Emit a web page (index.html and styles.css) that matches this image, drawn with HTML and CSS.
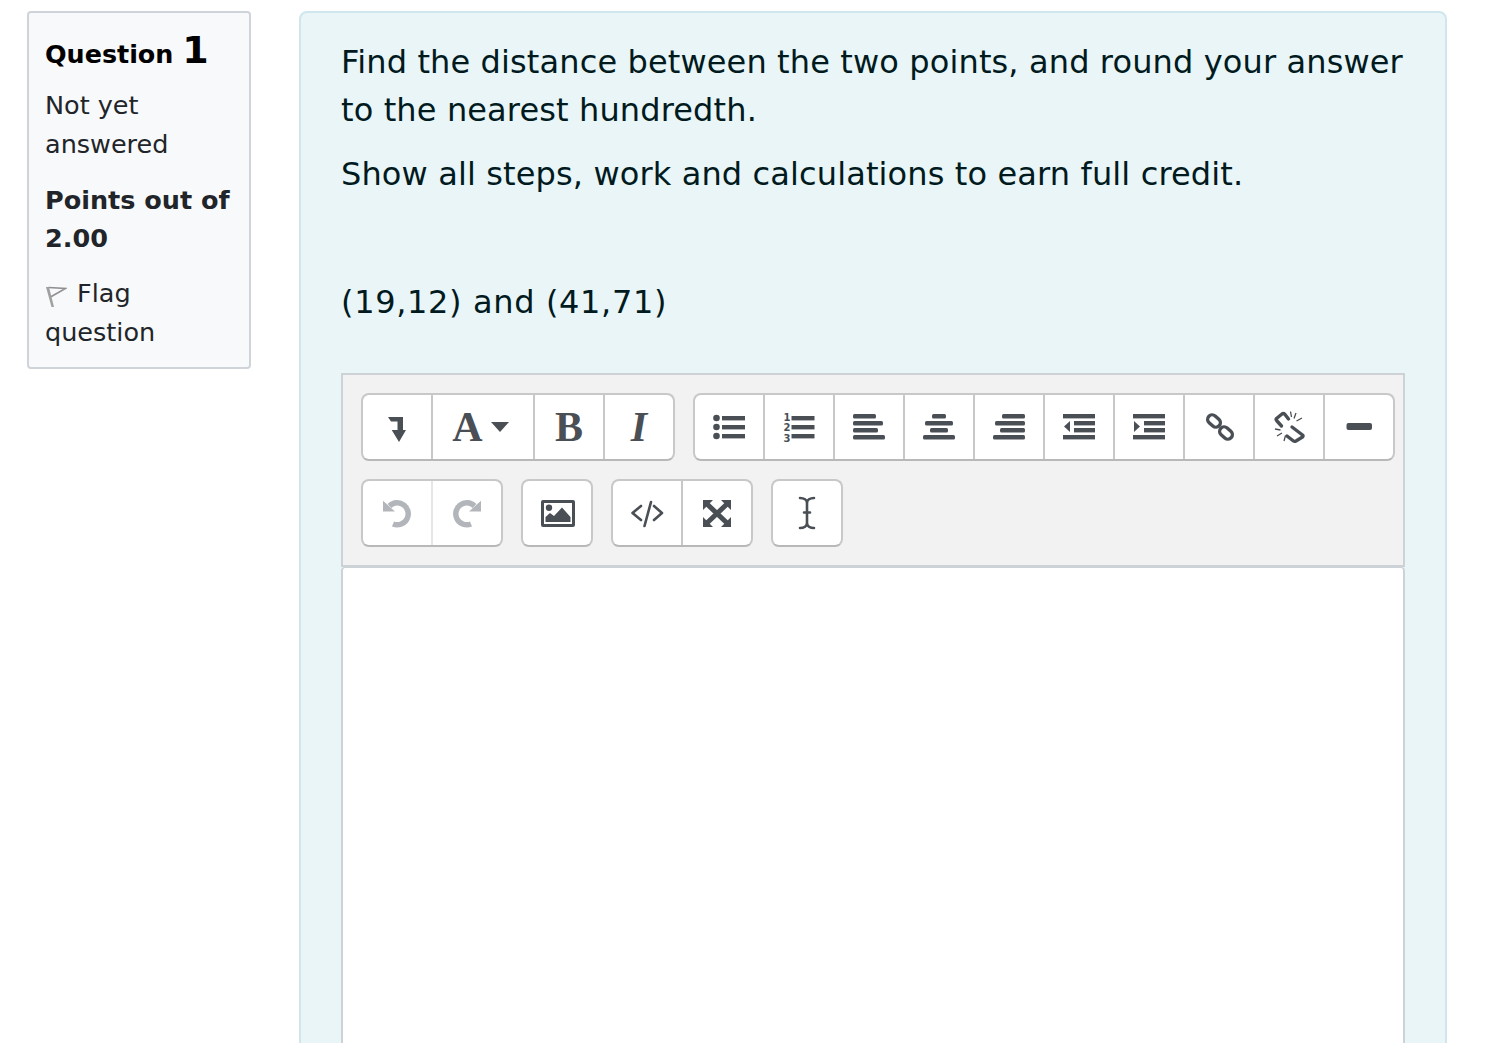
FILE: index.html
```html
<!DOCTYPE html>
<html lang="en">
<head>
<meta charset="utf-8">
<title>Question 1</title>
<link rel="stylesheet" href="styles.css">
</head>
<body>
<div class="page">
  <aside class="info">
    <h3 class="qno">Question <span class="num">1</span></h3>
    <div class="state">Not yet answered</div>
    <div class="grade">Points out of 2.00</div>
    <div class="flag">
      <svg class="flag-icon" viewBox="0 0 22 22" width="22" height="22"><path d="M3.500 1.500L20.500 2.500L5.500 11" fill="none" stroke="#8f8f8f" stroke-width="1.600"/><path d="M1 1H4L9 21H6.500Z" fill="#a0a0a0"/></svg>
      Flag question
    </div>
  </aside>
  <main class="content">
    <p class="para">Find the distance between the two points, and round your answer to the nearest hundredth.</p>
    <p class="para">Show all steps, work and calculations to earn full credit.</p>
    <p class="para">&nbsp;</p>
    <p class="para coords">(19,12) and (41,71)</p>
    <div class="toolbar">
      <div class="row">
        <div class="group">
          <span class="btn"><svg class="ic" viewBox="0 0 32 32"><path d="M7 6H22V19H25L18 31L10.700 19H16.500V10.500H10Z"/></svg></span>
          <span class="btn wide"><span class="glyph">A</span><span class="caret"></span></span>
          <span class="btn"><span class="glyph">B</span></span>
          <span class="btn"><span class="glyph it">I</span></span>
        </div>
        <div class="group">
          <span class="btn"><svg class="ic" viewBox="0 0 32 32"><circle cx="3.500" cy="7" r="3.300"/><circle cx="3.500" cy="16" r="3.300"/><circle cx="3.500" cy="25" r="3.300"/><rect x="9" y="5" width="23" height="4.400"/><rect x="9" y="14" width="23" height="4.400"/><rect x="9" y="23" width="23" height="4.400"/></svg></span>
          <span class="btn"><svg class="ic" viewBox="0 0 32 32"><text class="nums" x="0.500" y="9.500">1</text><text class="nums" x="0.500" y="20">2</text><text class="nums" x="0.500" y="30.500">3</text><rect x="8.500" y="5" width="23" height="4.400"/><rect x="8.500" y="14" width="23" height="4.400"/><rect x="8.500" y="23" width="23" height="4.400"/></svg></span>
          <span class="btn"><svg class="ic" viewBox="0 0 32 32"><rect x="0" y="3" width="23" height="4.400" rx="1.500"/><rect x="0" y="10" width="30" height="4.400" rx="1.500"/><rect x="0" y="17" width="25" height="4.400" rx="1.500"/><rect x="0" y="24" width="32" height="4.400" rx="1.500"/></svg></span>
          <span class="btn"><svg class="ic" viewBox="0 0 32 32"><rect x="9" y="3" width="14" height="4.400" rx="1.500"/><rect x="2" y="10" width="28" height="4.400" rx="1.500"/><rect x="7" y="17" width="18" height="4.400" rx="1.500"/><rect x="0" y="24" width="32" height="4.400" rx="1.500"/></svg></span>
          <span class="btn"><svg class="ic" viewBox="0 0 32 32"><rect x="9" y="3" width="23" height="4.400" rx="1.500"/><rect x="2" y="10" width="30" height="4.400" rx="1.500"/><rect x="7" y="17" width="25" height="4.400" rx="1.500"/><rect x="0" y="24" width="32" height="4.400" rx="1.500"/></svg></span>
          <span class="btn"><svg class="ic" viewBox="0 0 32 32"><rect x="0" y="3" width="32" height="4.400"/><rect x="11" y="10" width="21" height="4.400"/><rect x="11" y="17" width="21" height="4.400"/><rect x="0" y="24" width="32" height="4.400"/><path d="M7 10V21L1 15.500Z"/></svg></span>
          <span class="btn"><svg class="ic" viewBox="0 0 32 32"><rect x="0" y="3" width="32" height="4.400"/><rect x="11" y="10" width="21" height="4.400"/><rect x="11" y="17" width="21" height="4.400"/><rect x="0" y="24" width="32" height="4.400"/><path d="M1 10V21L7 15.500Z"/></svg></span>
          <span class="btn"><svg class="ic line" viewBox="0 0 32 32"><rect x="4" y="5.500" width="14" height="9" rx="4.500" transform="rotate(42 11 10)"/><rect x="16" y="17.500" width="14" height="9" rx="4.500" transform="rotate(42 23 22)"/></svg></span>
          <span class="btn"><svg class="ic line" viewBox="0 0 32 32"><path d="M15.500 8L12 3.500Q10.500 2 9 3L3.500 7.500Q2.500 8.500 4 10L8.500 15"/><path d="M19 16L29.500 24Q30.500 25 29.500 26L23 30Q21.500 30.800 20.500 30L14 25"/><path class="spark" d="M17.500 0.500L18.500 6M23 2L21 7.500M29 7L23.500 10M2 18L7.500 19M4 25L9 22M11 30L12.500 24.500"/></svg></span>
          <span class="btn"><svg class="ic" viewBox="0 0 32 32"><rect x="3.500" y="12" width="25.500" height="7" rx="2"/></svg></span>
        </div>
      </div>
      <div class="row">
        <div class="group">
          <span class="btn"><svg class="ic off" viewBox="0 0 32 32"><path d="M2 3.700V14.600H14Z"/><path class="arc" d="M8.500 9A11 11 0 1 1 12 27"/></svg></span>
          <span class="btn soft"><svg class="ic off" viewBox="0 0 32 32"><path d="M30 3.700V14.600H18Z"/><path class="arc" d="M23.500 9A11 11 0 1 0 20 27"/></svg></span>
        </div>
        <div class="group">
          <span class="btn"><svg class="ic" viewBox="0 0 32 32"><path fill-rule="evenodd" d="M2 3H32Q34 3 34 5V28Q34 30 32 30H2Q0 30 0 28V5Q0 3 2 3ZM3 6V27H31V6Z"/><circle cx="8" cy="10.700" r="3.200"/><path d="M4.500 25V20L9 16L13 19L21 10.500L29.500 20V25Z"/></svg></span>
        </div>
        <div class="group">
          <span class="btn"><svg class="ic line thin" viewBox="0 0 32 32"><path d="M10 9L1.500 16L10 23M20 5L13.500 29M23 9L31 16L23 23"/></svg></span>
          <span class="btn"><svg class="ic" viewBox="0 0 32 32"><path class="x" d="M6 7L26 26M26 7L6 26"/><path d="M2 3H12L2 13ZM30 3H20L30 13ZM2 30H12L2 20ZM30 30H20L30 20Z"/></svg></span>
        </div>
        <div class="group">
          <span class="btn"><svg class="ic line thin" viewBox="0 0 32 32"><path d="M9 1C13 1 16 3 16 6V26C16 29 13 31 9 31M23 1C19 1 16 3 16 6M16 26C16 29 19 31 23 31M13 15.500H19"/></svg></span>
        </div>
      </div>
    </div>
    <div class="editor"></div>
  </main>
</div>
</body>
</html>
```
FILE: styles.css
```css
* { box-sizing: border-box; }
html, body { margin: 0; height: 1043px; overflow: hidden; background: #fff; }
body { font-family: "DejaVu Sans", sans-serif; color: #212529; }
.page { display: flex; gap: 48px; padding: 11px 50px 0 27px; height: 1043px; overflow: hidden; align-items: flex-start; }
.info { width: 224px; flex: none; background: #f8f9fa; border: 2px solid #ced4da; border-radius: 4px; padding: 13px 6px 15px 16px; font-size: 25.500px; line-height: 39px; }
.qno { margin: 0 0 11px; font-size: 25.400px; line-height: 48px; font-weight: 700; color: #000; height: 49px; }
.num { font-size: 38px; }
.state { margin-bottom: 17px; }
.grade { font-weight: 700; margin-bottom: 17px; width: 190px; line-height: 38px; }
.flag-icon { vertical-align: -6px; margin-right: 2px; }
.content { flex: 1; height: 1200px; background: #e9f5f7; border: 2px solid #cfe7ec; border-radius: 8px; padding: 25px 40px; }
.para { margin: 0 0 16px; font-size: 32px; line-height: 48px; letter-spacing: 0.130px; color: #001a1e; }
.coords { letter-spacing: 0.650px; }
.toolbar { margin-top: 47px; background: #f2f2f2; border: 2px solid #ccd2d5; padding: 18px 8px 18px 18px; display: flex; flex-direction: column; gap: 18px; }
.row { display: flex; gap: 18px; }
.group { display: flex; background: #fff; border: 2px solid #c8c8c8; border-bottom-color: #b8b8b8; border-radius: 8px; height: 68px; }
.btn { width: 70px; height: 64px; border-left: 2px solid #c8c8c8; display: flex; align-items: center; justify-content: center; color: #4a4f55; }
.btn:first-child { width: 68px; border-left: 0; }
.btn.soft { border-left-color: #e6e6e6; }
.btn.wide { width: 102px; padding-right: 5px; }
.ic { width: 32px; height: 32px; fill: #4a4f55; flex: none; overflow: visible; }
.ic.off { fill: #b2b6ba; }
.ic.line { fill: none; stroke: #4a4f55; stroke-width: 3.400; stroke-linecap: round; stroke-linejoin: round; }
.ic.thin { stroke-width: 2.600; }
.spark { stroke-width: 1.300; stroke-linecap: butt; }
.arc { fill: none; stroke: #b2b6ba; stroke-width: 5.500; }
.x { fill: none; stroke: #4a4f55; stroke-width: 5; }
.nums { font-family: "DejaVu Sans", sans-serif; font-size: 10px; font-weight: 700; }
.glyph { font-family: "Liberation Serif", serif; font-size: 42px; font-weight: 700; line-height: 42px; color: #4a4f55; }
.glyph.it { font-style: italic; }
.caret { width: 0; height: 0; margin-left: 8px; border-style: solid; border-width: 10px 9px 0; border-color: #4a4f55 transparent transparent; }
.editor { height: 700px; background: #fff; border: 2px solid #ccd2d5; border-top-width: 1px; border-radius: 4px 4px 0 0; }
```
